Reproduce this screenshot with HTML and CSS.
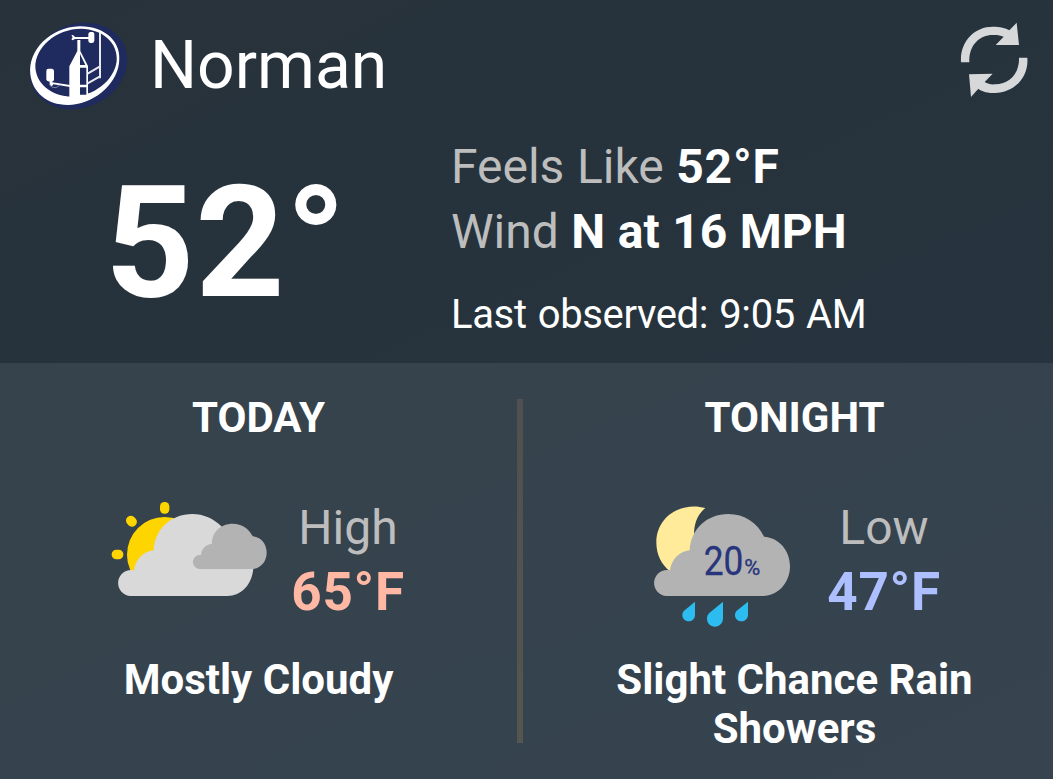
FILE: index.html
```html
<!DOCTYPE html>
<html lang="en">
<head>
<meta charset="utf-8">
<title>Norman weather</title>
<link rel="stylesheet" href="styles.css">
</head>
<body>
<main class="widget">
  <section class="current">
    <header class="header">
      <svg class="logo" viewBox="0 0 360 315">
        <ellipse cx="175" cy="153" rx="151" ry="125" transform="rotate(-25 175 153)" fill="#1f2a5e"/>
        <path fill="#fff" fill-rule="evenodd" d="M31 178C23 107 91 36 178 34C255 33 307 81 297 145C288 212 218 270 143 270C81 270 37 232 31 178ZM46 157C49 207 93 242 151 245C219 246 282 199 290 139C295 82 247 43 184 41C107 41 45 98 46 157Z"/>
        <path fill="#fff" d="M148 251V154L172 108V75H181V108L204 153V241L179 248Z"/>
        <path fill="#1f2a5e" d="M180 117L196 150H180ZM180 158H199V209H180ZM180 217H199V239H180Z"/>
        <path fill="#fff" d="M154 61L159 60L165 66H205V56Q206 51 211 51H218Q223 52 223 57V77Q222 84 216 84H211Q205 83 205 77V72H165L158 76L154 73L158 67ZM79 168Q79 161 85 161H96Q102 162 102 168V194Q101 199 97 199V202L150 210V216L100 208L94 216L89 210V200Q79 199 79 193Z"/>
        <path d="M240 53V190M203 176L240 154M203 205L240 184" fill="none" stroke="#e8e9ef" stroke-width="6"/>
        <path d="M88 207Q95 221 108 218L121 210" fill="none" stroke="#7980a0" stroke-width="3"/>
      </svg>
      <h1 class="city">Norman</h1>
      <svg class="refresh" viewBox="0 0 330 300" fill="#d6d8da">
        <path d="M63 157C59 94 104 50 158 50C181 50 196 54 208 61L230 38L237 105H167L191 80C180 76 171 74 158 75C118 75 86 106 88 157Z"/>
        <path d="M262 143C267 203 221 248 165 249C145 249 127 246 115 236L93 261L87 193L158 191L134 216C143 222 154 224 165 223C210 222 239 188 237 143Z"/>
      </svg>
    </header>
    <div class="observation">
      <div class="temperature">52°</div>
      <div class="details">
        <p class="detail">Feels Like <b class="feels">52°F</b></p>
        <p class="detail">Wind <b>N at 16 MPH</b></p>
        <p class="updated">Last observed: 9:05 AM</p>
      </div>
    </div>
  </section>
  <section class="forecast">
    <article class="period">
      <h2 class="period-name">TODAY</h2>
      <div class="summary">
        <svg class="weather-icon" viewBox="0 0 540 435">
          <g fill="#ffd500">
            <circle cx="194" cy="194" r="113"/>
            <rect x="180" y="36" width="28" height="35" rx="13"/>
            <rect x="35" y="179" width="35" height="29" rx="14"/>
            <rect x="80" y="77" width="29" height="34" rx="14" transform="rotate(-42 94 94)"/>
          </g>
          <path fill="#d9d9d9" d="M92 318A39 39 0 1 1 102 241C106 209 130 184 161 181C164 117 213 72 277 72C311 72 341 86 364 109L460 235C456 285 424 318 382 318Z"/>
          <path fill="#b3b3b3" d="M297 237A21 21 0 1 1 303 195C304 176 318 163 336 161C335 127 362 101 398 101C426 101 447 116 458 139C482 140 500 161 500 188C500 214 483 233 460 237Z"/>
        </svg>
        <div class="range"><span class="range-label">High</span><span class="range-value high">65°F</span></div>
      </div>
      <p class="conditions">Mostly Cloudy</p>
    </article>
    <div class="divider"></div>
    <article class="period">
      <h2 class="period-name">TONIGHT</h2>
      <div class="summary">
        <svg class="weather-icon" viewBox="-12 0 540 435">
          <path fill="#ffeb99" d="M196 54C125 34 49 79 49 157C49 195 65 224 89 243L175 180L162 130C163 93 177 70 196 54Z"/>
          <path fill="#b3b3b3" d="M80 318A39 39 0 1 1 90 241C94 209 118 184 149 181C152 117 201 72 265 72C313 72 353 99 372 140C418 143 450 182 450 229C450 278 414 318 370 318Z"/>
          <path fill="#2dbcef" d="M165 335V374C165 386 157 394 146 394C135 394 127 386 127 376C127 370 129 365 134 361ZM249 335V385C249 400 238 410 225 410C211 410 201 399 201 386C201 379 203 374 208 369ZM324 335V374C324 386 315 394 304 394C293 394 285 386 285 376C285 370 287 365 292 361Z"/>
          <text class="chance" x="191" y="255" font-size="121" textLength="119" lengthAdjust="spacingAndGlyphs">20</text>
          <text class="chance" x="313" y="255" font-size="67" textLength="48" lengthAdjust="spacingAndGlyphs">%</text>
        </svg>
        <div class="range"><span class="range-label">Low</span><span class="range-value low">47°F</span></div>
      </div>
      <p class="conditions">Slight Chance Rain Showers</p>
    </article>
  </section>
</main>
</body>
</html>
```

FILE: styles.css
```css
* { box-sizing: border-box; margin: 0; padding: 0; }
body { font-family: Roboto, sans-serif; color: #fff; }
.widget {
  width: 1053px; height: 779px; display: flex; flex-direction: column; overflow: hidden;
  background: linear-gradient(155deg, #36434c 0%, #36434c 45%, #35434f 75%, #37444f 100%);
}
.current { height: 363px; background: linear-gradient(155deg, #28323b, #26333c 55%, #27343f); }
.header { display: flex; height: 134px; }
.logo { width: 120px; height: 105px; margin: 15px 0 0 20px; }
.city { margin-left: 10px; font-size: 66px; font-weight: 400; line-height: 131px; }
.refresh { width: 110px; height: 100px; margin: 10px 3px 0 auto; }
.observation { display: flex; }
.temperature { width: 451px; padding-left: 105px; font-size: 156px; font-weight: 700; line-height: 217px; letter-spacing: 0.8px; }
.details { white-space: nowrap; }
.detail { font-size: 48px; line-height: 65px; color: #bdbdbd; word-spacing: 0.6px; }
.detail b { color: #fff; font-weight: 700; }
.detail .feels { letter-spacing: 0.8px; }
.updated { margin-top: 26px; font-size: 40px; line-height: 49px; letter-spacing: -0.35px; word-spacing: 1.5px; }
.forecast { display: flex; justify-content: space-between; height: 416px; }
.period { width: 517px; text-align: center; padding-top: 25px; }
.period-name { font-size: 42px; font-weight: 700; line-height: 60px; }
.summary { display: flex; padding-left: 100px; margin-top: 42px; }
.weather-icon { width: 180px; height: 145px; flex: none; }
.range { width: 136px; padding-top: 5px; display: flex; flex-direction: column; }
.range-label { font-size: 48px; line-height: 65px; color: #bdbdbd; }
.range-value { font-size: 53px; font-weight: 700; line-height: 65px; letter-spacing: 0.7px; }
.high { color: #ffb8a3; }
.low { color: #adbfff; }
.conditions { margin: 20px auto 0; width: 420px; font-size: 42px; font-weight: 700; line-height: 49px; }
.divider { width: 6px; height: 344px; margin: 36px 13px 0 0; background: linear-gradient(#505050, #55564f); }
.chance { fill: #27357c; stroke: #27357c; stroke-width: 1; font-family: Roboto, sans-serif; }
```
